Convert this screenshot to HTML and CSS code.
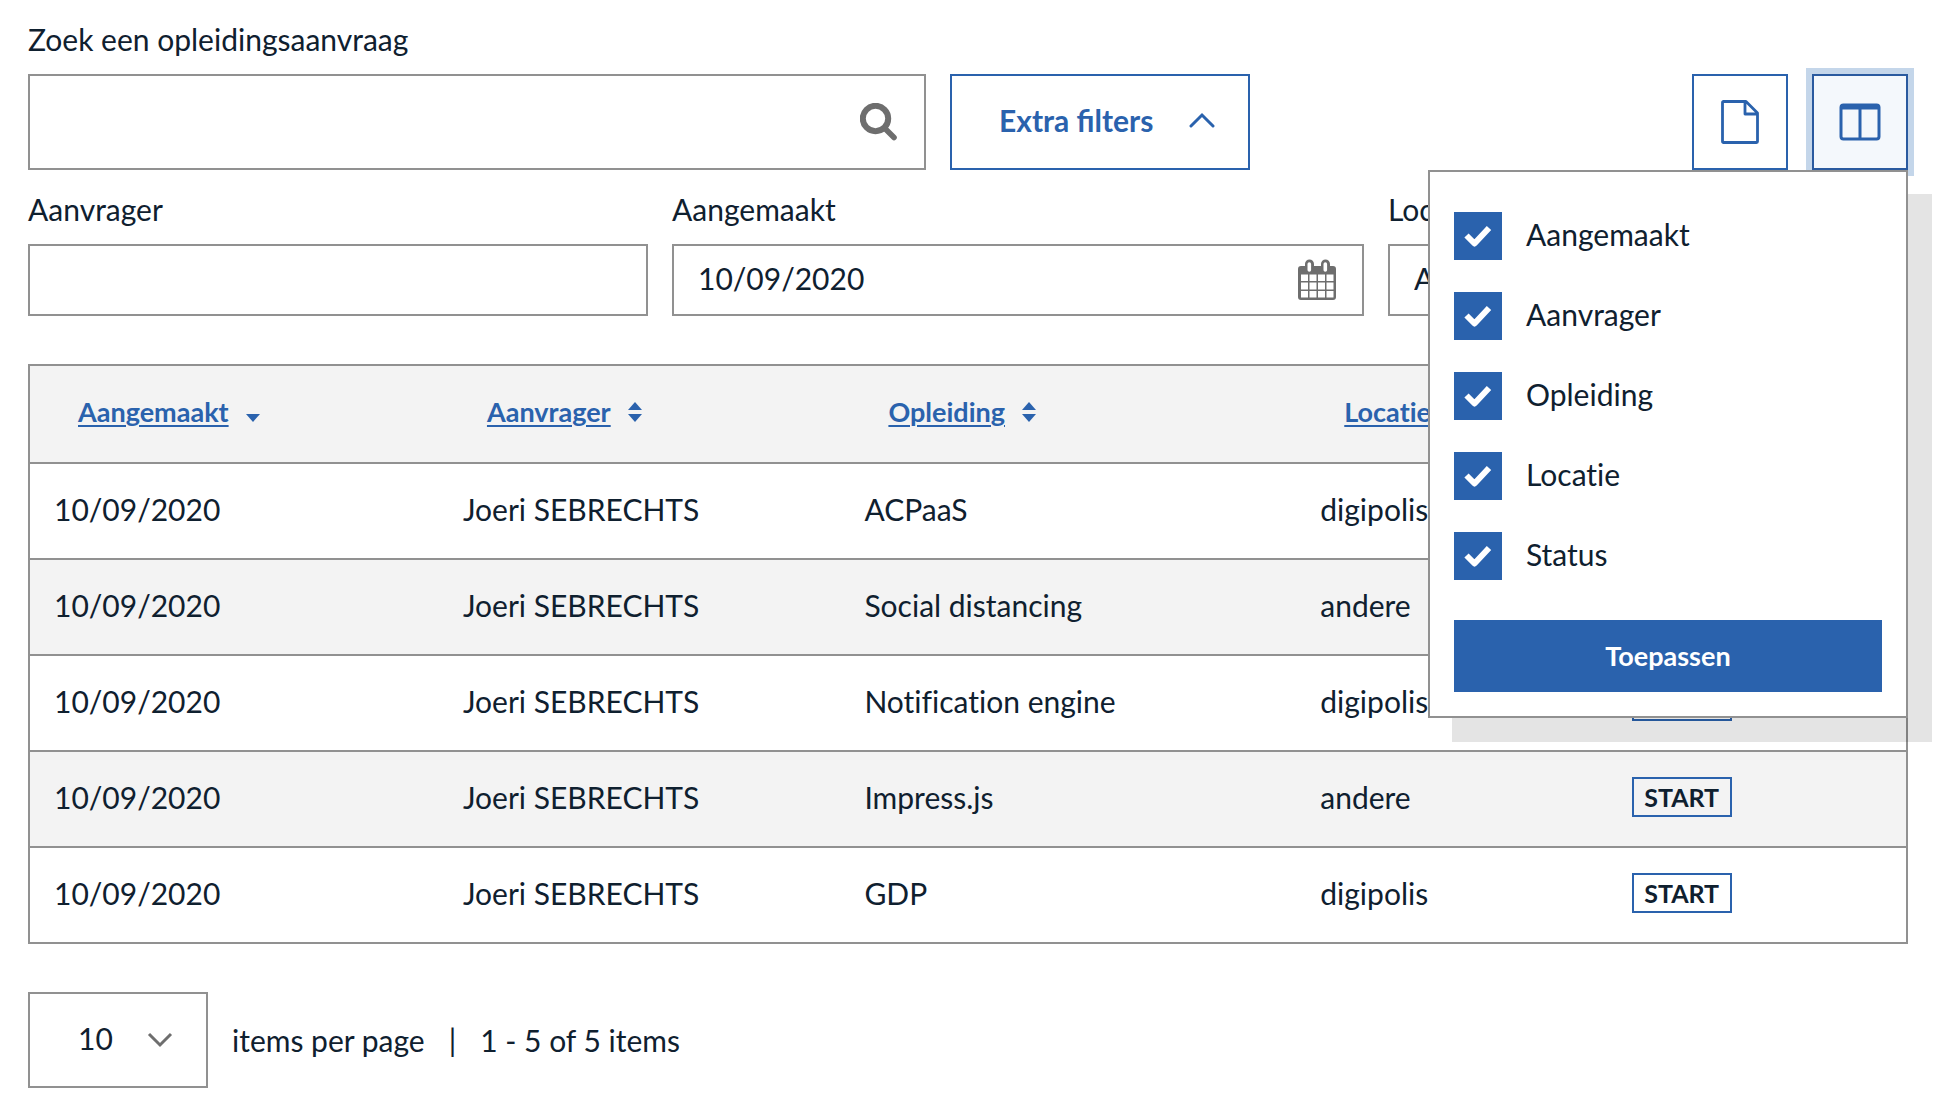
FILE: index.html
```html
<!DOCTYPE html>
<html lang="nl">
<head>
<meta charset="utf-8">
<meta name="viewport" content="width=device-width, initial-scale=1">
<title>Opleidingsaanvragen</title>
<link rel="stylesheet" href="styles.css">
</head>
<body>
<main class="page">
  <form class="filters">
    <div class="toolbar">
      <div class="field">
        <label class="label" for="search">Zoek een opleidingsaanvraag</label>
        <div class="control control-large">
          <input class="input" id="search" type="text">
          <svg class="icon icon-search" viewBox="0 0 38 38" aria-hidden="true"><circle cx="15.500" cy="15.500" r="12.700" fill="none" stroke="currentColor" stroke-width="6"/><path d="M25 25.500l9 9" stroke="currentColor" stroke-width="5.600" stroke-linecap="round"/></svg>
        </div>
      </div>
      <button class="button button-outline" type="button" aria-expanded="true">
        Extra filters
        <svg class="chevron" viewBox="0 0 26 16" aria-hidden="true"><path d="M2 14L13 3l11 11" fill="none" stroke="currentColor" stroke-width="3" stroke-linecap="round"/></svg>
      </button>
      <button class="button button-icon button-export" type="button" aria-label="Exporteren">
        <svg class="icon-file" viewBox="0 0 38 44" aria-hidden="true"><path d="M2.500 1.500H25L36.500 13v28.500a1 1 0 0 1-1 1h-33a1 1 0 0 1-1-1v-39a1 1 0 0 1 1-1zM24 2v12h12" fill="none" stroke="currentColor" stroke-width="2.800" stroke-linejoin="round"/></svg>
      </button>
      <div class="columns-menu">
        <button class="button button-icon button-active" type="button" aria-label="Kolommen" aria-expanded="true">
          <svg class="icon-columns" viewBox="0 0 42 38" aria-hidden="true"><rect x="2" y="2" width="38" height="34" rx="2.500" fill="none" stroke="currentColor" stroke-width="3"/><path d="M21 5v31" fill="none" stroke="currentColor" stroke-width="3"/><path d="M2 2.500h38v4H2z" fill="currentColor"/></svg>
        </button>
        <div class="popup">
          <ul class="options">
            <li><label class="option"><span class="tick"><input type="checkbox" checked><svg viewBox="0 0 30 24" aria-hidden="true"><path d="M3.500 11.500l8 8L26 4" fill="none" stroke="#fff" stroke-width="6" stroke-linejoin="round"/></svg></span><span class="option-text">Aangemaakt</span></label></li>
            <li><label class="option"><span class="tick"><input type="checkbox" checked><svg viewBox="0 0 30 24" aria-hidden="true"><path d="M3.500 11.500l8 8L26 4" fill="none" stroke="#fff" stroke-width="6" stroke-linejoin="round"/></svg></span><span class="option-text">Aanvrager</span></label></li>
            <li><label class="option"><span class="tick"><input type="checkbox" checked><svg viewBox="0 0 30 24" aria-hidden="true"><path d="M3.500 11.500l8 8L26 4" fill="none" stroke="#fff" stroke-width="6" stroke-linejoin="round"/></svg></span><span class="option-text">Opleiding</span></label></li>
            <li><label class="option"><span class="tick"><input type="checkbox" checked><svg viewBox="0 0 30 24" aria-hidden="true"><path d="M3.500 11.500l8 8L26 4" fill="none" stroke="#fff" stroke-width="6" stroke-linejoin="round"/></svg></span><span class="option-text">Locatie</span></label></li>
            <li><label class="option"><span class="tick"><input type="checkbox" checked><svg viewBox="0 0 30 24" aria-hidden="true"><path d="M3.500 11.500l8 8L26 4" fill="none" stroke="#fff" stroke-width="6" stroke-linejoin="round"/></svg></span><span class="option-text">Status</span></label></li>
          </ul>
          <button class="button button-primary" type="button">Toepassen</button>
        </div>
      </div>
    </div>
    <div class="extra">
      <div class="field">
        <label class="label" for="requester">Aanvrager</label>
        <div class="control"><input class="input" id="requester" type="text"></div>
      </div>
      <div class="field">
        <label class="label" for="created">Aangemaakt</label>
        <div class="control">
          <input class="input" id="created" type="text" value="10/09/2020">
          <svg class="icon icon-calendar" viewBox="0 0 38 42" aria-hidden="true"><path fill="currentColor" fill-rule="evenodd" d="M3 7H7V5a4.500 4.500 0 0 1 9 0V7h7V5a4.500 4.500 0 0 1 9 0V7h3a3 3 0 0 1 3 3V38a3 3 0 0 1-3 3H3a3 3 0 0 1-3-3V10a3 3 0 0 1 3-3zM9.500 5v6a1.800 1.800 0 0 0 3.600 0V5a1.800 1.800 0 0 0-3.600 0zM25.500 5v6a1.800 1.800 0 0 0 3.600 0V5a1.800 1.800 0 0 0-3.600 0zM3 15.500v6.500h7v-6.500zM11.500 15.500v6.500h7v-6.500zM20 15.500v6.500h7v-6.500zM28.500 15.500v6.500H35.500v-6.500zM3 23.500v7h7v-7zM11.500 23.500v7h7v-7zM20 23.500v7h7v-7zM28.500 23.500v7H35.500v-7zM3 32v6.500h7V32zM11.500 32v6.500h7V32zM20 32v6.500h7V32zM28.500 32v6.500H35.500V32z"/></svg>
        </div>
      </div>
      <div class="field">
        <label class="label" for="location">Locatie</label>
        <div class="control">
          <select class="input" id="location"><option>Alle</option></select>
        </div>
      </div>
    </div>
  </form>

  <table class="table">
    <colgroup><col class="col-created"><col class="col-requester"><col class="col-course"><col class="col-location"><col class="col-status"></colgroup>
    <thead>
      <tr>
        <th scope="col"><a class="sort" href="#">Aangemaakt</a><svg class="arrows" viewBox="0 0 14 20" aria-hidden="true"><path d="M0 12h14l-7 8z" fill="currentColor"/></svg></th>
        <th scope="col"><a class="sort" href="#">Aanvrager</a><svg class="arrows" viewBox="0 0 14 20" aria-hidden="true"><path d="M0 8h14L7 0zM0 12h14l-7 8z" fill="currentColor"/></svg></th>
        <th scope="col"><a class="sort" href="#">Opleiding</a><svg class="arrows" viewBox="0 0 14 20" aria-hidden="true"><path d="M0 8h14L7 0zM0 12h14l-7 8z" fill="currentColor"/></svg></th>
        <th scope="col"><a class="sort" href="#">Locatie</a><svg class="arrows" viewBox="0 0 14 20" aria-hidden="true"><path d="M0 8h14L7 0zM0 12h14l-7 8z" fill="currentColor"/></svg></th>
        <th scope="col"><a class="sort" href="#">Status</a></th>
      </tr>
    </thead>
    <tbody>
      <tr><td>10/09/2020</td><td>Joeri SEBRECHTS</td><td>ACPaaS</td><td>digipolis</td><td><span class="badge">START</span></td></tr>
      <tr><td>10/09/2020</td><td>Joeri SEBRECHTS</td><td>Social distancing</td><td>andere</td><td><span class="badge">START</span></td></tr>
      <tr><td>10/09/2020</td><td>Joeri SEBRECHTS</td><td>Notification engine</td><td>digipolis</td><td><span class="badge">START</span></td></tr>
      <tr><td>10/09/2020</td><td>Joeri SEBRECHTS</td><td>Impress.js</td><td>andere</td><td><span class="badge">START</span></td></tr>
      <tr><td>10/09/2020</td><td>Joeri SEBRECHTS</td><td>GDP</td><td>digipolis</td><td><span class="badge">START</span></td></tr>
    </tbody>
  </table>

  <footer class="pager">
    <div class="control control-large page-size">
      <select class="input" id="page-size"><option>10</option></select>
      <svg class="icon chevron" viewBox="0 0 26 16" aria-hidden="true"><path d="M2 2l11 11L24 2" fill="none" stroke="currentColor" stroke-width="3"/></svg>
    </div>
    <label for="page-size">items per page</label>
    <span>|</span>
    <span>1 - 5 of 5 items</span>
  </footer>
</main>
</body>
</html>
```
FILE: styles.css
```css
:root {
  --blue: #2a62ad;
  --ink: #0f202f;
  --line: #919191;
  --grey: #6e6e6e;
  --stripe: #f3f3f3;
}

* {
  box-sizing: border-box;
}

body {
  margin: 0;
  background: #fff;
  color: var(--ink);
  font: 30px/38px Lato, "Liberation Sans", sans-serif;
}

button,
input,
select {
  margin: 0;
  color: inherit;
  font: inherit;
}

.page {
  padding: 20px 40px 30px 28px;
}

.toolbar {
  display: grid;
  grid-template-columns: minmax(0, 898fr) 300px minmax(96px, 514fr) 96px;
  gap: 24px;
  align-items: end;
}

.extra {
  display: grid;
  grid-template-columns: 620fr 692fr 520fr;
  gap: 24px;
  margin-top: 20px;
}

.field {
  min-width: 0;
}

.label {
  display: block;
  margin-bottom: 16px;
}

.control {
  display: flex;
  align-items: center;
  height: 72px;
  border: 2px solid var(--line);
}

.control-large {
  height: 96px;
}

.input {
  flex: 1;
  min-width: 0;
  height: 100%;
  padding: 0 24px 4px;
  border: 0;
  outline: 0;
  background: none;
  appearance: none;
}

.icon {
  flex: none;
  color: var(--grey);
}

.icon-search {
  width: 38px;
  height: 38px;
  margin-right: 26px;
}

.icon-calendar {
  width: 38px;
  height: 42px;
  margin-right: 26px;
}

.chevron {
  width: 26px;
  height: 16px;
}

.button {
  display: flex;
  align-items: center;
  justify-content: center;
  height: 96px;
  padding: 0;
  border: 2px solid var(--blue);
  background: #fff;
  color: var(--blue);
  font-weight: 700;
}

.button-outline {
  justify-content: space-between;
  padding: 0 33px 4px 47px;
}

.button-icon {
  width: 96px;
}

.button-export {
  justify-self: end;
}

.button-active {
  border-color: #2a5a9f;
  background: #f4f8fc;
  box-shadow: 0 0 0 6px #c4d6ea;
}

.icon-file {
  width: 38px;
  height: 44px;
}

.icon-columns {
  width: 42px;
  height: 38px;
}

.columns-menu {
  position: relative;
}

.popup {
  position: absolute;
  top: 100%;
  right: 0;
  z-index: 1;
  width: 480px;
  padding: 40px 24px 24px;
  border: 2px solid var(--line);
  background: #fff;
  box-shadow: 24px 24px 0 rgba(0, 0, 0, 0.106);
  font-variant-ligatures: none;
}

.options {
  display: grid;
  gap: 32px;
  margin: 0 0 40px;
  padding: 0;
  list-style: none;
}

.option {
  display: flex;
  align-items: center;
  gap: 24px;
}

.option-text {
  padding-bottom: 4px;
}

.tick {
  display: grid;
  place-items: center;
  width: 48px;
  height: 48px;
}

.tick > * {
  grid-area: 1 / 1;
}

.tick input {
  width: 48px;
  height: 48px;
  background: var(--blue);
  appearance: none;
}

.tick svg {
  z-index: 1;
  width: 30px;
  height: 24px;
  pointer-events: none;
}

.button-primary {
  width: 100%;
  height: 72px;
  background: var(--blue);
  color: #fff;
  font-size: 27px;
}

.table {
  width: 100%;
  margin-top: 48px;
  border: 2px solid var(--line);
  border-spacing: 0;
  table-layout: fixed;
  font-variant-ligatures: none;
}

.col-created {
  width: 21.8%;
}

.col-requester {
  width: 21.4%;
}

.col-course {
  width: 24.3%;
}

.col-location {
  width: 16.6%;
}

.table th {
  height: 96px;
  padding: 0 0 4px 48px;
  background: var(--stripe);
  color: var(--blue);
  font-size: 27px;
  text-align: left;
}

.table td {
  height: 96px;
  padding: 0 0 4px 24px;
  border-top: 2px solid var(--line);
}

.table tbody tr:nth-child(even) {
  background: var(--stripe);
}

.sort {
  color: inherit;
  text-decoration-thickness: 2px;
  text-underline-offset: 3px;
}

.arrows {
  width: 14px;
  height: 20px;
  margin-left: 17px;
}

.badge {
  display: block;
  width: 100px;
  border: 2px solid var(--blue);
  font-size: 25px;
  font-weight: 700;
  line-height: 36px;
  text-align: center;
}

.pager {
  display: flex;
  align-items: center;
  gap: 24px;
  margin-top: 48px;
}

.page-size {
  width: 180px;
}

.page-size .input {
  padding-left: 48px;
  padding-right: 0;
}

.page-size .chevron {
  margin-right: 33px;
}
```
